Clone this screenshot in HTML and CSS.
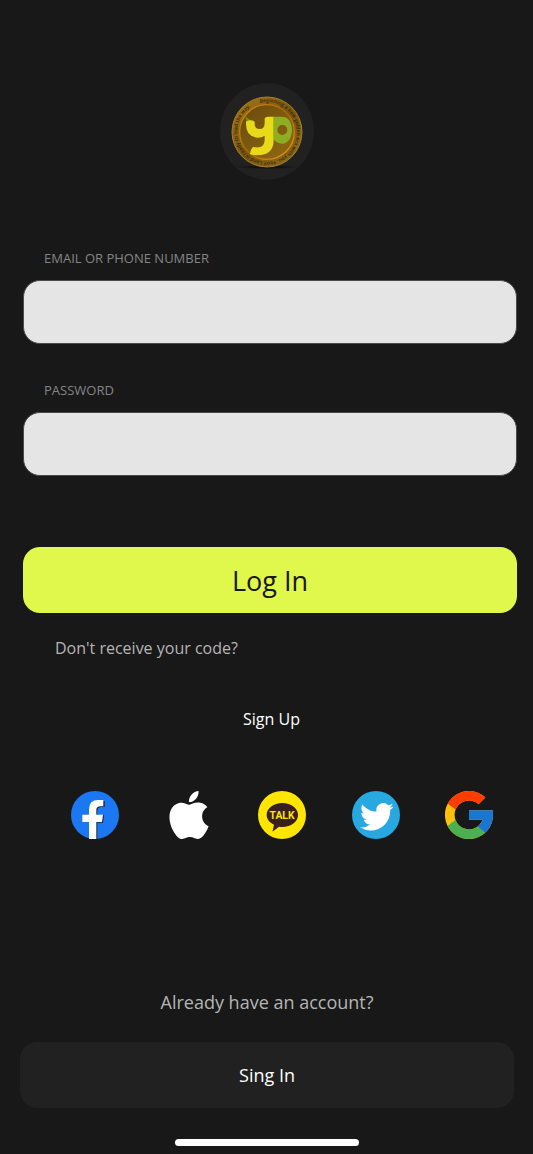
FILE: index.html
```html
<!DOCTYPE html>
<html lang="en">
<head>
<meta charset="utf-8">
<meta name="viewport" content="width=device-width, initial-scale=1">
<title>Log In</title>
<link rel="stylesheet" href="styles.css">
</head>
<body>
<main class="screen">
  <svg class="logo" viewBox="24 21 282 291" role="img" aria-label="YooY Land">
    <defs>
      <linearGradient id="rim" x1="0" y1="0" x2="1" y2="1">
        <stop offset="0" stop-color="#a87a18"/><stop offset=".5" stop-color="#78560f"/><stop offset="1" stop-color="#94701c"/>
      </linearGradient>
      <linearGradient id="ring" x1="0" y1="0" x2="1" y2="1">
        <stop offset="0" stop-color="#dd8a14"/><stop offset=".5" stop-color="#a8650c"/><stop offset="1" stop-color="#f09a1c"/>
      </linearGradient>
      <linearGradient id="face" x1="0" y1="0" x2="1" y2="1">
        <stop offset="0" stop-color="#684a0c"/><stop offset="1" stop-color="#916a12"/>
      </linearGradient>
      <radialGradient id="shade"><stop offset="0" stop-color="#050505"/><stop offset="1" stop-color="#050505" stop-opacity="0"/></radialGradient>
      <path id="orbit" d="M144 81A89 89 0 0 1 186 255A89 89 0 0 1 144 81"/>
    </defs>
    <ellipse cx="165" cy="166" rx="141" ry="145" fill="#212121"/>
    <ellipse cx="165" cy="273" rx="98" ry="6" fill="url(#shade)"/>
    <circle cx="165" cy="168" r="105" fill="url(#rim)" stroke="#a67d26" stroke-width="3"/>
    <circle cx="165" cy="168" r="82" fill="url(#face)" stroke="url(#ring)" stroke-width="4"/>
    <text class="motto"><textPath href="#orbit">Beginning a new golden era with you. YooY Land is ready to lead the way.</textPath></text>
    <path fill="#8ead22" fill-rule="evenodd" d="M184 122h27c18 0 29 17 29 39s-11 42-29 42q-17 0-27-14zM211 147a15 15 0 1 0 0 30a15 15 0 1 0 0-30z"/>
    <path d="M101 121l17 14-15 6z" fill="#65911c"/>
    <path d="M102 137q14-8 26 0v6q0 16 15 16 15 0 15-19v-10q0-8 10-8h17v70q0 46-49 46-12 0-22-4 0-12 9-22 9 3 17 2 17-1 18-22v-13q-8 6-21 6-35-2-35-40z" fill="#e8da18"/>
    <path d="M185 122v72" stroke="#a6b51a" stroke-width="3"/>
  </svg>

  <form class="login">
    <div class="field">
      <label for="account">EMAIL OR PHONE NUMBER</label>
      <input id="account" type="text" autocomplete="username">
    </div>
    <div class="field">
      <label for="password">PASSWORD</label>
      <input id="password" type="password" autocomplete="current-password">
    </div>
    <button class="submit" type="submit">Log In</button>
  </form>

  <a class="resend" href="#resend">Don't receive your code?</a>
  <a class="signup" href="#signup">Sign Up</a>

  <nav class="social" aria-label="Other ways to sign up">
    <a href="#facebook" aria-label="Facebook">
      <svg viewBox="36 33 144 144">
        <circle cx="108" cy="105" r="72" fill="#1b78f2"/>
        <path d="M94 177v-51H74v-20h20V90q0-27 28-27h15v18h-10q-12 0-12 11v14h20l-3 22h-17v49z" fill="#182235"/>
        <path d="M90 177v-51H70v-22h20V88q0-28 28-28h15v19h-9q-12 0-12 11v14h20l-3 22h-17v51z" fill="#fff"/>
      </svg>
    </a>
    <a href="#apple" aria-label="Apple">
      <svg viewBox="0 0 24 24"><path fill="#fff" d="M12.152 6.896c-.948 0-2.415-1.078-3.960-1.040-2.040.027-3.910 1.183-4.961 3.014-2.117 3.675-.546 9.103 1.519 12.090 1.013 1.454 2.208 3.090 3.792 3.039 1.520-.065 2.090-.987 3.935-.987 1.831 0 2.350.987 3.960.948 1.637-.026 2.676-1.480 3.676-2.948 1.156-1.688 1.636-3.325 1.662-3.415-.039-.013-3.182-1.221-3.220-4.857-.026-3.040 2.480-4.494 2.597-4.559-1.429-2.090-3.623-2.324-4.390-2.376-2-.156-3.675 1.090-4.610 1.090zM15.530 3.830c.843-1.012 1.400-2.427 1.245-3.830-1.207.052-2.662.805-3.532 1.818-.780.896-1.454 2.338-1.273 3.714 1.338.104 2.715-.688 3.559-1.701"/></svg>
    </a>
    <a href="#kakaotalk" aria-label="KakaoTalk">
      <svg viewBox="24 33 144 144">
        <circle cx="96" cy="105" r="72" fill="#ffe500"/>
        <path d="M97 69c26 0 47 16 47 36s-21 36-47 36q-5 0-10-1l-18 14q-2 1-1-2l4-18c-14-7-22-17-22-29 0-20 21-36 47-36z" fill="#3a1f1f"/>
        <text class="talk" x="96" y="118" text-anchor="middle">TALK</text>
      </svg>
    </a>
    <a href="#twitter" aria-label="Twitter">
      <svg viewBox="0 0 48 48">
        <circle cx="24" cy="24" r="24" fill="#28a8e0"/>
        <path transform="translate(8 9) scale(1.400)" fill="#fff" d="M23.953 4.570a10 10 0 01-2.825.775 4.958 4.958 0 002.163-2.723c-.951.555-2.005.959-3.127 1.184a4.920 4.920 0 00-8.384 4.482C7.690 8.095 4.067 6.130 1.640 3.162a4.822 4.822 0 00-.666 2.475c0 1.710.870 3.213 2.188 4.096a4.904 4.904 0 01-2.228-.616v.060a4.923 4.923 0 003.946 4.827 4.996 4.996 0 01-2.212.085 4.936 4.936 0 004.604 3.417 9.867 9.867 0 01-6.102 2.105c-.390 0-.779-.023-1.170-.067a13.995 13.995 0 007.557 2.209c9.053 0 13.998-7.496 13.998-13.985 0-.210 0-.420-.015-.630A9.935 9.935 0 0024 4.590z"/>
      </svg>
    </a>
    <a href="#google" aria-label="Google">
      <svg viewBox="4 4 40 40">
        <path fill="#ffc107" d="M43.611 20.083H42V20H24v8h11.303c-1.649 4.657-6.080 8-11.303 8-6.627 0-12-5.373-12-12s5.373-12 12-12c3.059 0 5.842 1.154 7.961 3.039l5.657-5.657C34.046 6.053 29.268 4 24 4 12.955 4 4 12.955 4 24s8.955 20 20 20 20-8.955 20-20c0-1.341-.138-2.650-.389-3.917z"/>
        <path fill="#ff3d00" d="M6.306 14.691l6.571 4.819C14.655 15.108 18.961 12 24 12c3.059 0 5.842 1.154 7.961 3.039l5.657-5.657C34.046 6.053 29.268 4 24 4 16.318 4 9.656 8.337 6.306 14.691z"/>
        <path fill="#4caf50" d="M24 44c5.166 0 9.860-1.977 13.409-5.192l-6.190-5.238C29.211 35.091 26.715 36 24 36c-5.202 0-9.619-3.317-11.283-7.946l-6.522 5.025C9.505 39.556 16.227 44 24 44z"/>
        <path fill="#1976d2" d="M43.611 20.083H42V20H24v8h11.303c-.792 2.237-2.231 4.166-4.084 5.570l6.190 5.238C36.971 39.205 44 34 44 24c0-1.341-.138-2.650-.389-3.917z"/>
      </svg>
    </a>
  </nav>

  <section class="existing">
    <p>Already have an account?</p>
    <button class="signin" type="button">Sing In</button>
  </section>
  <div class="home-bar"></div>
</main>
</body>
</html>
```
FILE: styles.css
```css
* { box-sizing: border-box; }

body {
  margin: 0;
  background: #181818;
  color: #fff;
  font-family: "Open Sans", "Noto Sans", sans-serif;
}

.screen {
  display: flex;
  flex-direction: column;
  min-height: 100vh;
  padding: 83px 16px 8px 20px;
}

.logo {
  align-self: center;
  width: 94px;
  height: 97px;
  margin-right: 4px;
}

.motto {
  fill: #33250a;
  font-size: 15px;
  font-weight: 600;
}

.login {
  display: flex;
  flex-direction: column;
  gap: 36px;
  margin-top: 68px;
  padding-left: 3px;
}

.field {
  display: flex;
  flex-direction: column;
  gap: 12px;
}

.field label {
  padding-left: 21px;
  color: #858585;
  font-size: 13px;
  line-height: 20px;
}

.field input {
  width: 100%;
  height: 64px;
  padding: 0 20px;
  border: 1px solid #4a4a4a;
  border-radius: 17px;
  background: #e5e5e5;
  color: #181818;
  font: inherit;
  font-size: 18px;
}

.submit,
.signin {
  height: 66px;
  padding: 0;
  border: 0;
  border-radius: 17px;
  font-family: inherit;
}

.submit {
  margin-top: 35px;
  background: #e0f74b;
  color: #181818;
  font-size: 27px;
}

a {
  color: inherit;
  text-decoration: none;
}

.resend {
  align-self: flex-start;
  margin: 23px 0 0 35px;
  color: #b5b5b5;
  font-size: 16px;
  line-height: 24px;
}

.signup {
  align-self: center;
  margin: 47px 0 0 6px;
  font-size: 16px;
  line-height: 24px;
}

.social {
  display: flex;
  justify-content: space-between;
  margin: 60px 24px 0 51px;
}

.social a,
.social svg {
  display: block;
  width: 48px;
  height: 48px;
}

.talk {
  fill: #ffe500;
  font-family: Roboto, "Liberation Sans", sans-serif;
  font-size: 31px;
  font-weight: 700;
}

.existing {
  display: flex;
  flex-direction: column;
  gap: 28px;
  margin: auto 3px 0 0;
}

.existing p {
  margin: 0;
  color: #b5b5b5;
  font-size: 18px;
  line-height: 24px;
  text-align: center;
}

.signin {
  background: #212121;
  color: #fff;
  font-size: 18px;
}

.home-bar {
  align-self: center;
  width: 184px;
  height: 7px;
  margin: 31px 4px 0 0;
  border-radius: 4px;
  background: #fff;
}
```
